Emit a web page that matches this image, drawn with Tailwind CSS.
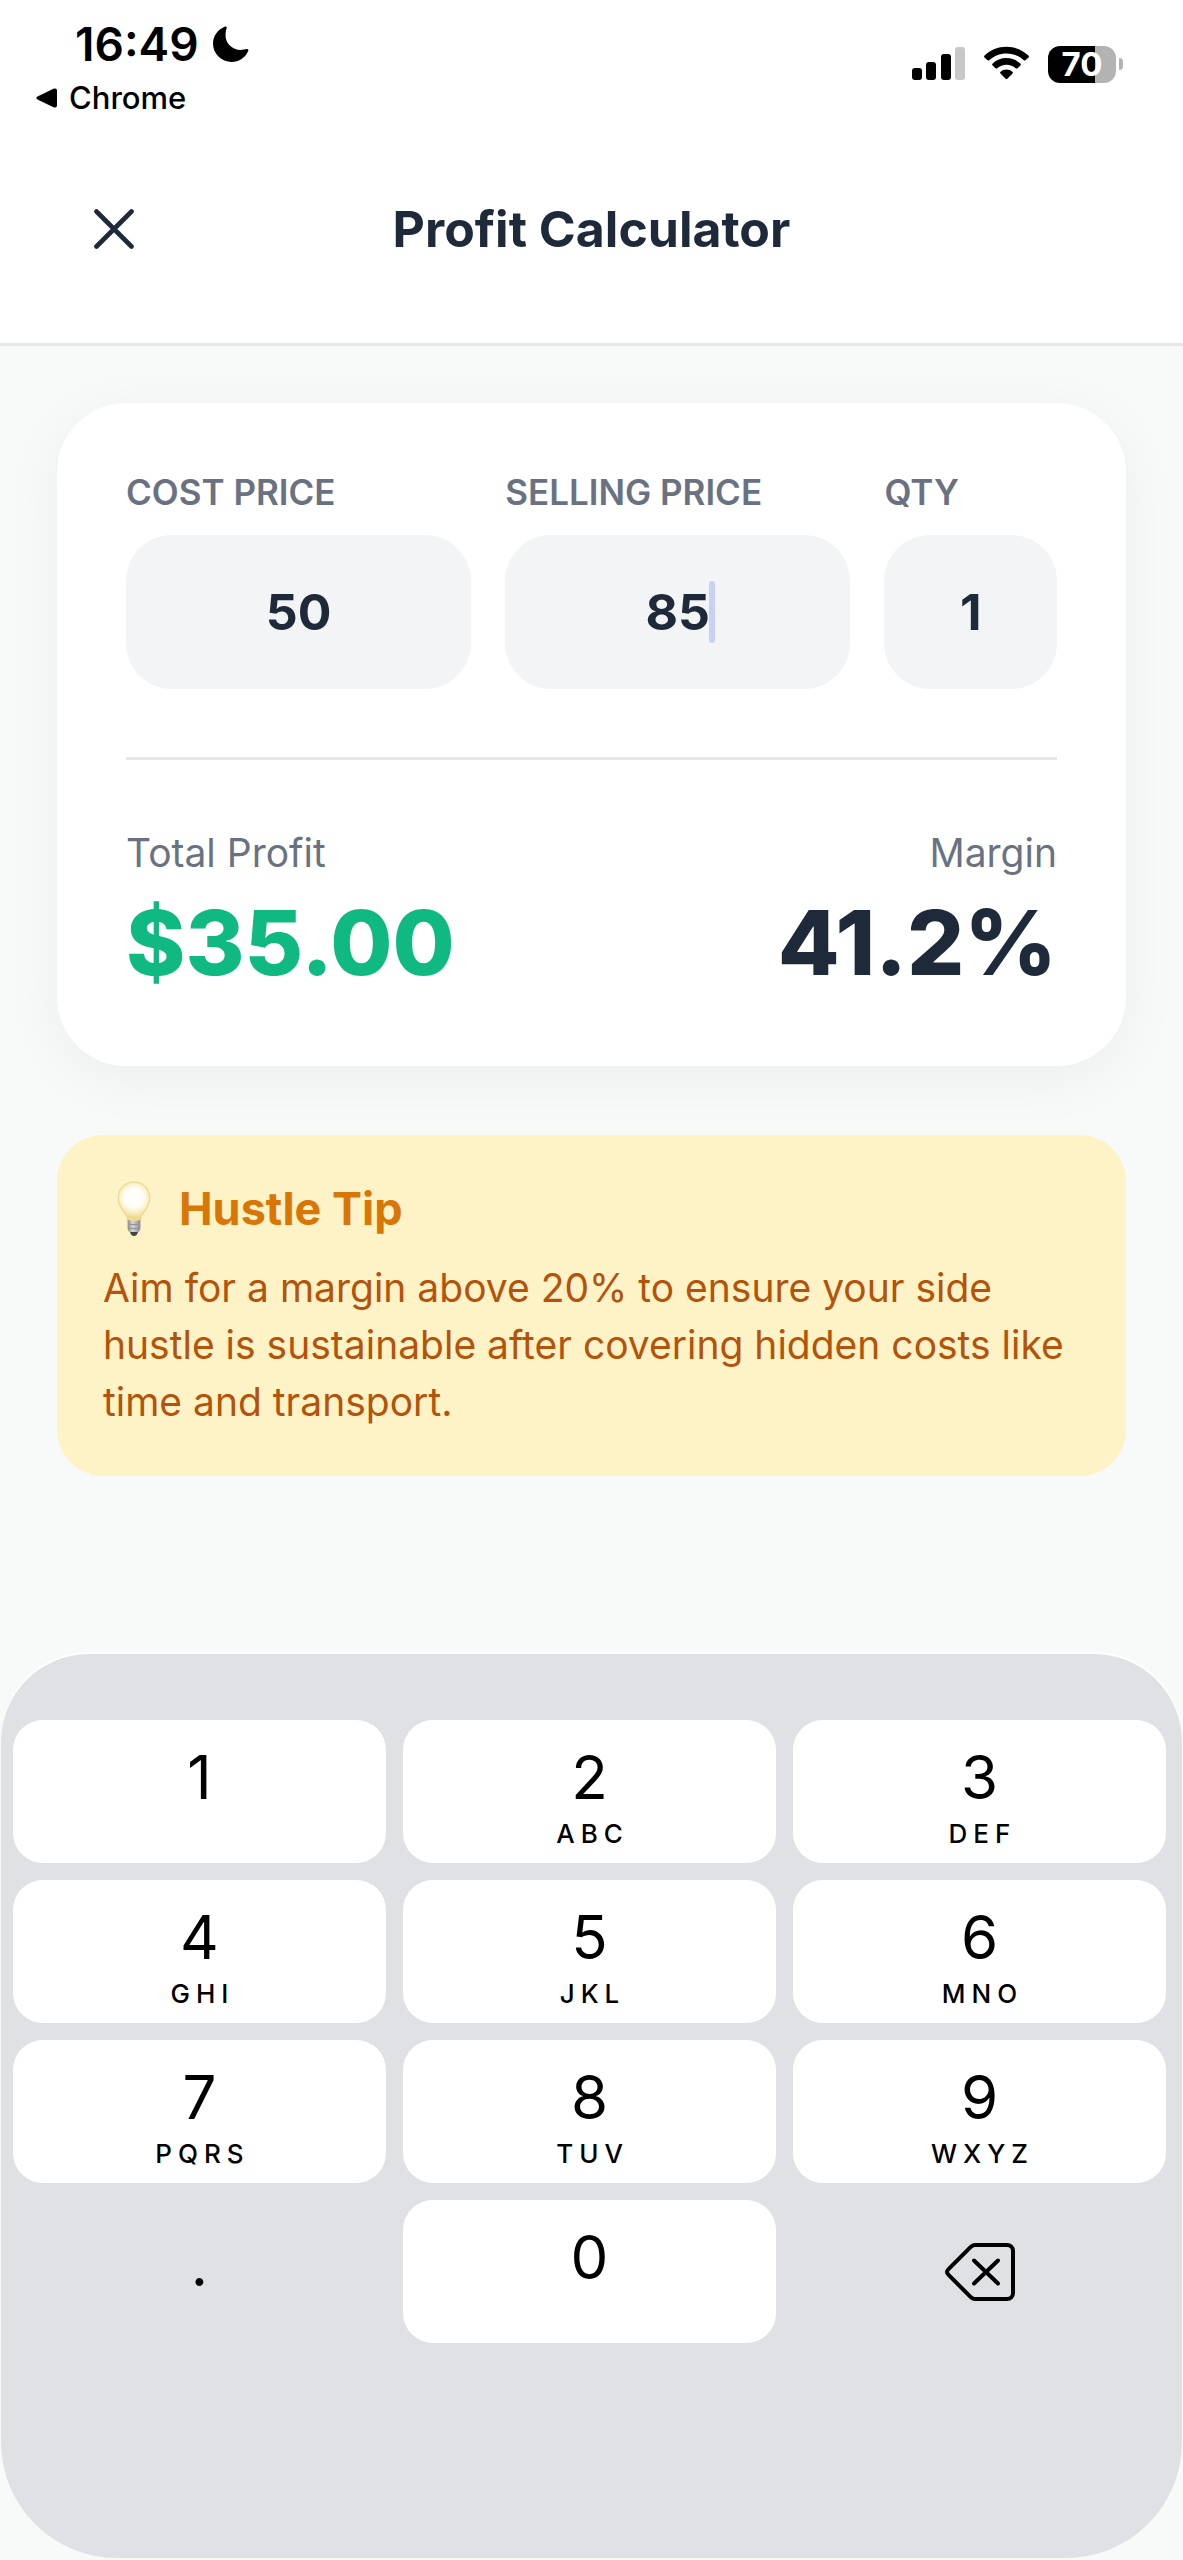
<!DOCTYPE html>
<html lang="en">
<head>
	<meta charset="UTF-8">
	<meta name="viewport" content="width=device-width, initial-scale=1.0">
	<title>Profit Calculator</title>
	<script src="https://cdn.jsdelivr.net/npm/@tailwindcss/browser@4"></script>
</head>
<body class="flex flex-col bg-[#f8fafa] min-h-screen font-[Inter,sans-serif] text-gray-800">

	<!-- Status bar -->
	<div class="flex justify-between bg-white pt-[18px] pr-[60px] pl-9 text-black">
		<div>
			<div class="flex items-center gap-[14px] pl-[39px] font-semibold text-[46px] leading-[52px]">
				<span>16:49</span>
				<svg class="w-9 h-9" viewBox="0 0 36 36" fill="currentColor" aria-hidden="true">
					<path d="M12.2.6c.9-.4 1.8.4 1.5 1.4C11.500 9 12.500 15 16.500 19.200c4.500 4.600 10.500 5.600 17.300 3.900 1-.3 1.900.6 1.500 1.600C32.500 31.500 26 36 18.600 36 8.300 36 0 27.800 0 17.600 0 10 5 3.200 12.200.6z"/>
				</svg>
			</div>
			<a href="#" class="flex items-center gap-3 mt-3 font-medium text-[31px] leading-8">
				<svg class="w-[21px] h-5" viewBox="0 0 21 20" fill="currentColor" aria-hidden="true">
					<path d="M1.500 8.500 18 .6C19.500 0 21 .8 21 2.400v15.200c0 1.600-1.500 2.400-3 1.800L1.500 11.500C0 10.800 0 9.200 1.500 8.500z"/>
				</svg>
				Chrome
			</a>
		</div>
		<div class="flex items-center gap-[19px] h-[92px]">
			<svg class="w-[54px] h-9" viewBox="0 0 54 36" aria-hidden="true">
				<rect x="1" y="22" width="10" height="12" rx="3"/>
				<rect x="15" y="16" width="10" height="18" rx="3"/>
				<rect x="30" y="8" width="10" height="26" rx="3"/>
				<rect x="44" y="1" width="10" height="33" rx="3" fill="#c8c8c8"/>
			</svg>
			<svg class="w-[45px] h-9" viewBox="0 0 45 36" aria-hidden="true">
				<path d="M.6 9.500C6.500 4 14 .8 22.500.8S38.500 4 44.400 9.500c.7.700.7 1.400.1 2l-2.700 2.600c-.6.600-1.300.6-2 .1C35 9.800 29 7.400 22.500 7.400S10 9.800 5.200 14.200c-.7.500-1.400.5-2-.1L.5 11.500c-.6-.6-.6-1.300.1-2z"/>
				<path d="M8.700 17.500c3.700-3.400 8.500-5.400 13.800-5.400s10.100 2 13.800 5.400c.7.700.7 1.400.1 2l-2.800 2.700c-.6.500-1.200.5-1.900 0-2.500-2.200-5.700-3.500-9.200-3.500s-6.700 1.300-9.200 3.500c-.7.500-1.300.5-1.900 0l-2.800-2.700c-.6-.6-.6-1.300.1-2z"/>
				<path d="M16.600 25.700c1.600-1.400 3.700-2.200 5.900-2.200s4.300.8 5.900 2.200c.7.600.7 1.300.1 1.900l-5.100 5.100c-.6.600-1.200.6-1.800 0l-5.100-5.100c-.6-.6-.6-1.300.1-1.900z"/>
			</svg>
			<div class="flex items-center gap-[3px]">
				<div class="flex justify-center items-center bg-[linear-gradient(90deg,#000_69%,#b3b3b3_69%)] rounded-xl w-[68px] h-[37px] font-bold text-[33px] text-white leading-none">70</div>
				<div class="bg-[#b3b3b3] rounded-r-full w-1 h-3"></div>
			</div>
		</div>
	</div>

	<!-- Header -->
	<header class="flex items-center bg-white px-[57px] border-gray-200 border-b-[3px] h-[232px]">
		<button type="button" aria-label="Close" class="flex justify-center items-center w-[114px] h-[114px]">
			<svg class="w-10 h-10" viewBox="0 0 40 40" fill="none" stroke="currentColor" stroke-width="4.600" stroke-linecap="round" aria-hidden="true">
				<path d="M2.500 2.500l35 35M37.500 2.500l-35 35"/>
			</svg>
		</button>
		<h1 class="flex-1 font-bold text-[50px] text-center leading-[60px]">Profit Calculator</h1>
		<div class="w-[114px]"></div>
	</header>

	<main class="flex flex-col flex-1 gap-[69px] px-[57px] py-[57px]">
		<!-- Calculator card -->
		<section class="bg-white shadow-[0_12px_60px_rgba(0,0,0,0.05)] p-[69px] rounded-[69px]">
			<form class="gap-[34px] grid grid-cols-[2fr_2fr_1fr]">
				<div class="min-w-0">
					<label for="cost" class="block mb-[22px] font-semibold text-[35px] text-gray-500 leading-[41px] whitespace-nowrap">COST PRICE</label>
					<input id="cost" type="text" inputmode="decimal" value="50" class="bg-gray-100 rounded-[46px] w-full h-[154px] font-bold text-[50px] text-center">
				</div>
				<div class="min-w-0">
					<label for="selling" class="block mb-[22px] font-semibold text-[35px] text-gray-500 leading-[41px] whitespace-nowrap">SELLING PRICE</label>
					<div class="relative">
						<input id="selling" type="text" inputmode="decimal" value="85" class="bg-gray-100 rounded-[46px] w-full h-[154px] font-bold text-[50px] text-center">
						<!-- Caret -->
						<span class="top-[46px] left-[calc(50%+31px)] absolute bg-[#c7d0f5] rounded-full w-[6px] h-[62px]"></span>
					</div>
				</div>
				<div class="min-w-0">
					<label for="qty" class="block mb-[22px] font-semibold text-[35px] text-gray-500 leading-[41px] whitespace-nowrap">QTY</label>
					<input id="qty" type="text" inputmode="numeric" value="1" class="bg-gray-100 rounded-[46px] w-full h-[154px] font-bold text-[50px] text-center">
				</div>
			</form>
			<div class="flex justify-between mt-[68px] pt-[69px] border-gray-200 border-t-[3px]">
				<div>
					<p class="text-[39px] text-gray-500 leading-[48px]">Total Profit</p>
					<p class="mt-3 font-extrabold text-[#10b981] text-[90px] leading-[108px]">$35.00</p>
				</div>
				<div class="text-right">
					<p class="text-[39px] text-gray-500 leading-[48px]">Margin</p>
					<p class="mt-3 font-extrabold text-[90px] leading-[108px]">41.2%</p>
				</div>
			</div>
		</section>

		<!-- Tip -->
		<section class="bg-[#fef3c7] p-[46px] rounded-[46px]">
			<h2 class="flex items-center gap-7 pl-[14px] font-bold text-[#d97706] text-[45px] leading-[55px]">
				<svg class="w-[34px] h-[55px]" viewBox="0 0 34 56" aria-hidden="true">
					<defs>
						<radialGradient id="glow" cx="17" cy="17" r="20" gradientUnits="userSpaceOnUse">
							<stop offset="0" stop-color="#fff"/>
							<stop offset="0.5" stop-color="#fffdf6"/>
							<stop offset="0.85" stop-color="#f8e9ae"/>
							<stop offset="1" stop-color="#eed98c"/>
						</radialGradient>
						<linearGradient id="base" x1="0" x2="1">
							<stop offset="0" stop-color="#8d8d8f"/>
							<stop offset="0.4" stop-color="#d6d6d8"/>
							<stop offset="1" stop-color="#8a8a90"/>
						</linearGradient>
					</defs>
					<path d="M17 1C8 1 1 8 1 17c0 8 4 12 7 16 2 3 2.500 5 3 7h12c.5-2 1-4 3-7 3-4 7-8 7-16C33 8 26 1 17 1z" fill="url(#glow)" stroke="#efdc93" stroke-width="1.500"/>
					<path d="M10.500 39.500c4 1.600 9 1.600 13 0v9c0 2-2 3.500-3 4h-7c-1-.5-3-2-3-4z" fill="url(#base)"/>
					<path d="M11 43.500c4 1.400 8 1.400 12 0M11 47.500c4 1.400 8 1.400 12 0" stroke="#8c8c92" fill="none"/>
					<path d="M13 52h8c-.5 2.500-2 4-4 4s-3.500-1.500-4-4z" fill="#444"/>
				</svg>
				Hustle Tip
			</h2>
			<p class="mt-[23px] text-[#b45309] text-[39px] leading-[57px]">Aim for a margin above 20% to ensure your side hustle is sustainable after covering hidden costs like time and transport.</p>
		</section>
	</main>

	<!-- Numeric keyboard -->
	<div class="bg-[#e0e1e5] shadow-[0_-2px_0_#fff] mx-px mb-0.5 pt-[66px] pr-4 pb-[215px] pl-3 rounded-t-[88px] rounded-b-[116px]">
		<div id="keys" class="gap-[17px] grid grid-cols-3"></div>
	</div>

	<script>
		const keys = [
			['1', ''], ['2', 'ABC'], ['3', 'DEF'],
			['4', 'GHI'], ['5', 'JKL'], ['6', 'MNO'],
			['7', 'PQRS'], ['8', 'TUV'], ['9', 'WXYZ']
		];
		const grid = document.getElementById('keys');

		function digitKey(digit, letters) {
			return `<button type="button" class="flex flex-col items-center bg-white pt-[21px] rounded-[30px] h-[143px] text-black">
				<span class="text-[60px] leading-[72px]">${digit}</span>
				<span class="mt-[6px] pl-[6px] font-medium text-[26px] leading-[30px] tracking-[6px]">${letters}</span>
			</button>`;
		}

		grid.innerHTML = keys.map(([digit, letters]) => digitKey(digit, letters)).join('') +
			`<button type="button" class="pb-4 h-[143px] text-[60px] text-black">.</button>` +
			digitKey('0', '') +
			`<button type="button" aria-label="Delete" class="flex justify-center items-center h-[143px] text-black">
				<svg class="w-[70px] h-[58px]" viewBox="0 0 70 58" fill="none" stroke="currentColor" stroke-width="4" stroke-linecap="round" stroke-linejoin="round" aria-hidden="true">
					<path d="M30 2h32c3.500 0 6 2.500 6 6v42c0 3.500-2.500 6-6 6H30c-1.600 0-2.800-.6-4-1.700L3.300 31.600c-1.700-1.600-1.700-3.600 0-5.200L26 3.700C27.200 2.600 28.400 2 30 2z"/>
					<path d="M29 17.500l24 23M53 17.500l-24 23"/>
				</svg>
			</button>`;
	</script>
</body>
</html>
